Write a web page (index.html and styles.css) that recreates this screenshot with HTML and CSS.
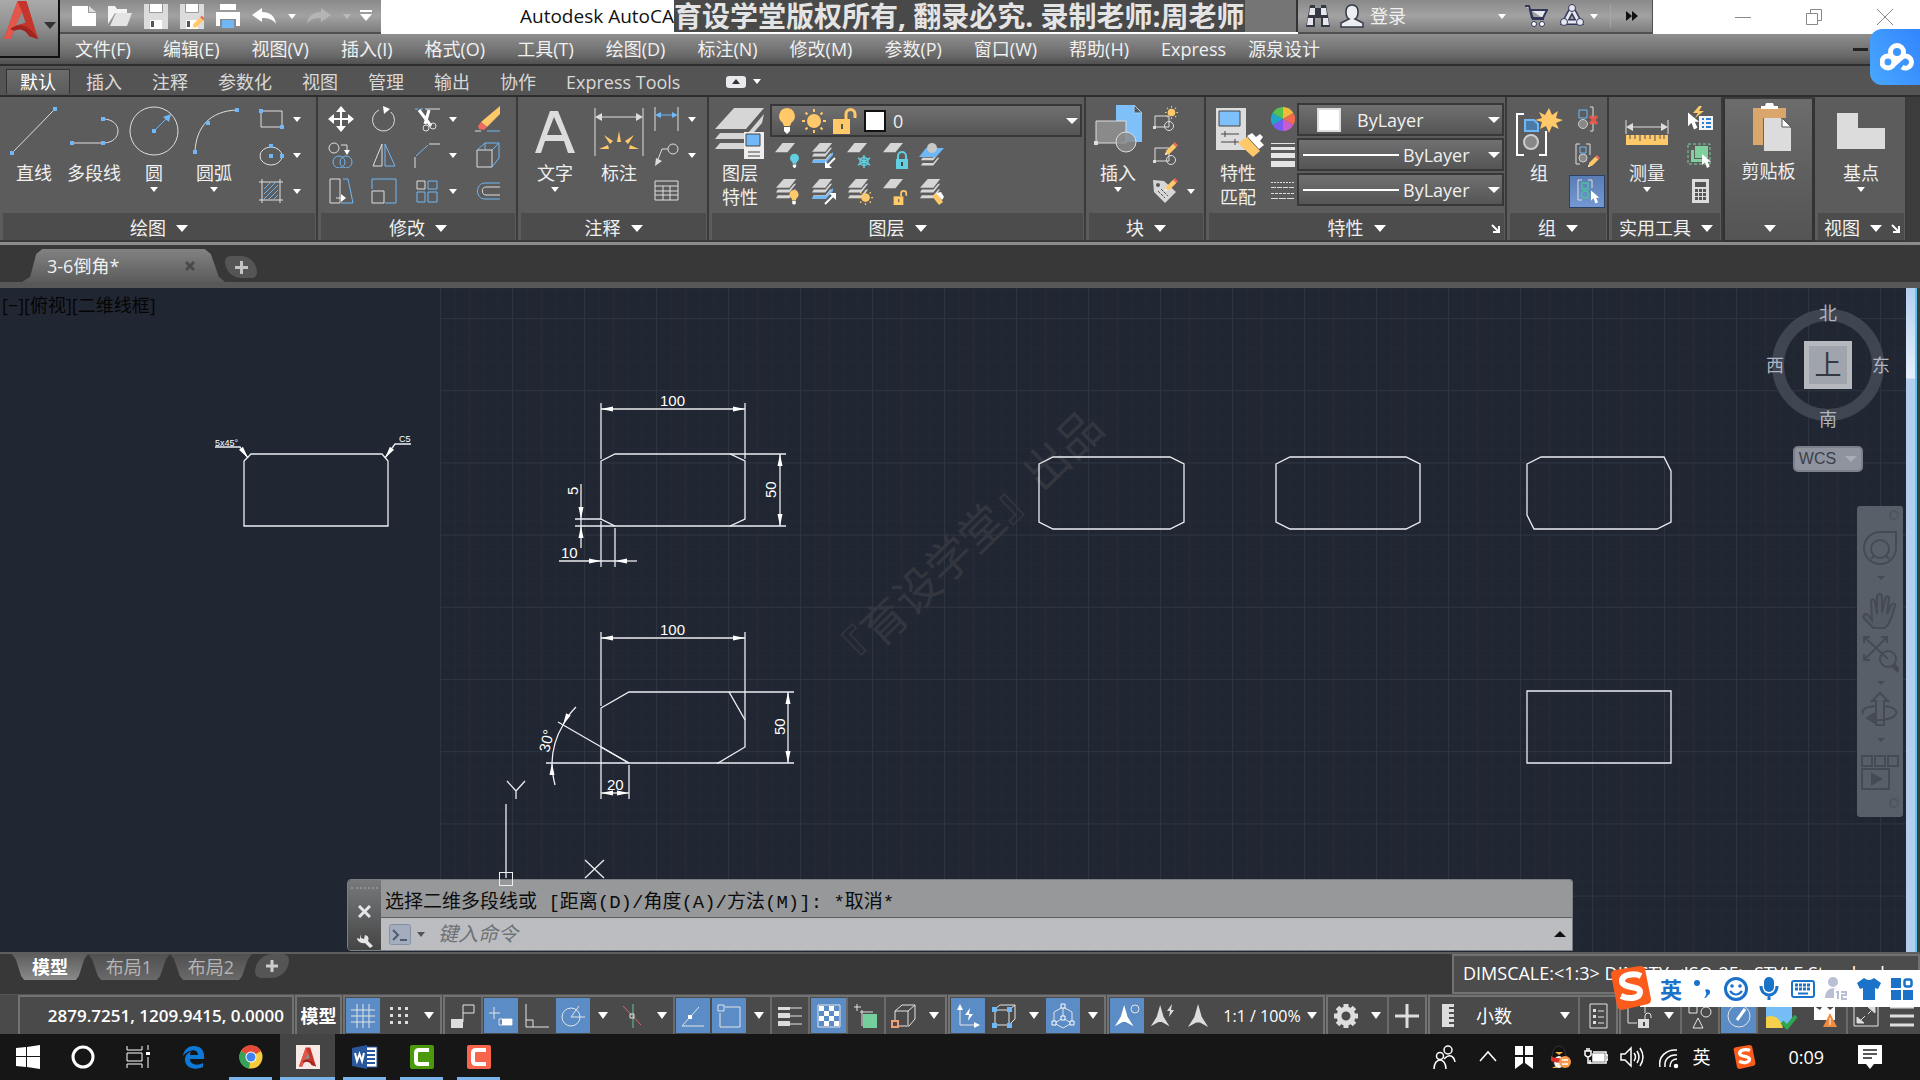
FILE: index.html
```html
<!DOCTYPE html>
<html lang="zh-CN">
<head>
  <meta charset="utf-8">
  <meta name="viewport" content="width=device-width, initial-scale=1">
  <title>Autodesk AutoCAD</title>
  <link rel="stylesheet" href="styles.css">
</head>
<body>
  <!-- shared icon parts -->
  <svg class="defs" width="0" height="0">
    <defs>
      <symbol id="sheet" viewBox="0 0 24 12"><path d="M9 0h15l-9 11H0z" fill="#d6d6d6"/></symbol>
      <symbol id="sheets" viewBox="0 0 26 24">
        <path d="M9 0h13l-7 9H1z" fill="#d6d6d6"/>
        <path d="M4 9L1 14h14l7-9h-2l-5 6H3zM4 15l-3 5h14l7-9h-2l-5 6H3z" fill="#d6d6d6"/>
      </symbol>
      <symbol id="bulb" viewBox="0 0 16 26"><path d="M8 0a8 8 0 0 1 4.500 14.500L11 18H5l-1.500-3.500A8 8 0 0 1 8 0z"/><path d="M5 19h6v4l-3 3-3-3z" fill="#fff"/></symbol>
      <symbol id="sun" viewBox="0 0 24 24"><circle cx="12" cy="12" r="7"/><path d="M12 0v3M12 21v3M0 12h3M21 12h3M3.500 3.500l2 2M18.500 18.500l2 2M20.500 3.500l-2 2M5.500 18.500l-2 2" stroke="#ffc869" stroke-width="2"/></symbol>
      <symbol id="unlock" viewBox="0 0 24 26"><path d="M0 11h17v15H0z"/><path d="M13 11V6a4 4 0 0 1 9 0v4" fill="none" stroke="#ffc869" stroke-width="3"/><path d="M8 16h2v5H8z" fill="#555"/></symbol>
      <symbol id="pencil" viewBox="0 0 16 16"><path d="M0 16l2-6 8-8 4 4-8 8z" fill="#ffc869"/><path d="M10 2l2-2 4 4-2 2z" fill="#f0685f"/><path d="M0 16l1-3 2 2z" fill="#fff"/></symbol>
      <symbol id="cursor" viewBox="0 0 14 20"><path d="M0 0v16l4-4 3 8 4-2-3-7h5z" fill="#fff"/></symbol>
      <symbol id="acadA" viewBox="0 0 40 46"><path d="M0 44L15 2h10l13 42-10-3-3-10-14 4-4 9z" fill="#c5352b"/><path d="M15 2l5 12-9 21-4 9-7 0z" fill="#e2574a"/><path d="M20 14l4 12-11 3z" fill="#8d8d8d"/><path d="M7 33c9-7 20-6 31 11l-10-3c-5-8-11-9-17-6z" fill="#a1251f"/></symbol>
      <symbol id="anno" viewBox="0 0 26 26"><path d="M12 0l4 14 7 11-9-5h-4l-9 5 7-11z"/></symbol>
      <symbol id="sogou" viewBox="0 0 44 44"><path d="M3 8Q3 5 7 4L32 0q4 0 5 3l6 30q0 4-3 5L14 44q-4 0-5-4z" fill="#fb5c1c"/><path d="M33 10c-6-3-19-2-19 5 0 8 18 4 18 11 0 6-10 8-19 4" fill="none" stroke="#fff" stroke-width="6"/></symbol>
      <symbol id="launcher" viewBox="0 0 9 9"><path d="M1 1l6 6M8 2v6H2" fill="none" stroke="#fff" stroke-width="2"/></symbol>
    </defs>
  </svg>

  <div class="app">
    <button class="app-button" aria-label="A">
      <svg width="36" height="42"><use href="#acadA"/></svg><i class="caret dark"></i>
    </button>

    <header class="titlebar">
      <div class="quick">
        <button><svg width="24" height="20" viewBox="0 0 24 20"><path d="M0 0h16v7h8v13H0z" fill="#fff"/><path d="M17 0l7 6h-7z" fill="#ddd"/></svg></button>
        <button><svg width="24" height="20" viewBox="0 0 24 20"><path d="M0 18V0h7l2 3h10v4H7z" fill="#f4f4f4"/><path d="M8 7h16l-5 13H2z" fill="#e4e4e4"/></svg></button>
        <button><svg width="24" height="25" viewBox="0 0 24 25"><path d="M0 0h5v9h14V0h5v25H0z" fill="#dcdcdc"/><path d="M6 0h12v8H6z" fill="#fff"/><path d="M6 16h12v9H6z" fill="#fff"/><path d="M7 17h3v6H7z" fill="#555"/></svg></button>
        <button><svg width="24" height="25" viewBox="0 0 24 25"><path d="M0 0h5v9h14V0h5v25H0z" fill="#dcdcdc"/><path d="M6 0h12v8H6z" fill="#fff"/><path d="M6 16h12v9H6z" fill="#fff"/><path d="M7 17h3v6H7z" fill="#555"/><use href="#pencil" x="12" y="11" width="13" height="14"/></svg></button>
        <button><svg width="24" height="25" viewBox="0 0 24 25"><path d="M4 0h16v6H4zM0 8h24v14H0z" fill="#fff"/><path d="M4 15h16v10H4z" fill="#888"/><path d="M6 16h12v8H6z" fill="#6fb7f7"/></svg></button>
        <button><svg width="24" height="16" viewBox="0 0 24 16"><path d="M10 0v4c8 0 13 4 14 12-3-5-8-6-14-6v4L0 7z" fill="#fff"/></svg></button>
        <button class="slim"><i class="caret"></i></button>
        <button><svg width="24" height="16" viewBox="0 0 24 16"><path d="M14 0v4C6 4 1 8 0 16c3-5 8-6 14-6v4l10-7z" fill="#b4b4b4"/></svg></button>
        <button class="slim"><i class="caret faint"></i></button>
        <button class="slim"><svg width="12" height="12" viewBox="0 0 12 12"><path d="M0 0h12v2H0zM0 4h12l-6 7z" fill="#fff"/></svg></button>
      </div>
      <h1 class="title">Autodesk AutoCA</h1>
      <div class="notice"><span>育设学堂版权所有, 翻录必究. 录制老师:周老师</span></div>
      <div class="account">
        <button class="icon"><svg width="24" height="24" viewBox="0 0 24 24"><path d="M4 1h5v3h6V1h5l4 22h-9v-9H9v9H0z" fill="#333842"/><path d="M4 4h5v7H3zM15 4h5l1 7h-6zM2 14h5v7H1zM17 14h5l1 7h-6z" fill="#e6e8ee"/></svg></button>
        <button class="login"><svg width="24" height="24" viewBox="0 0 24 24"><path d="M12 1c4 0 6 3 6 7 0 3-1 6-3 7l8 4v4H1v-4l8-4c-2-1-3-4-3-7 0-4 2-7 6-7z" fill="#eceef4" stroke="#353a48" stroke-width="1.500"/></svg>登录</button>
        <i class="caret push"></i>
        <button class="icon"><svg width="24" height="24" viewBox="0 0 24 24"><path d="M1 2h4l4 13h11M6 6h17l-4 8H8z" fill="#e6e8ee" stroke="#33385a" stroke-width="2"/><circle cx="10" cy="20" r="2.500" fill="#fff" stroke="#33385a"/><circle cx="18" cy="20" r="2.500" fill="#fff" stroke="#33385a"/></svg></button>
        <button class="icon"><svg width="24" height="24" viewBox="0 0 24 24"><path d="M12 5L5 18h14z" fill="none" stroke="#33385a" stroke-width="6"/><path d="M12 5L5 18h14z" fill="none" stroke="#e6e8ee" stroke-width="3"/><g fill="#e6e8ee" stroke="#33385a"><circle cx="12" cy="4" r="3.500"/><circle cx="4" cy="18" r="3.500"/><circle cx="20" cy="18" r="3.500"/></g></svg></button>
        <i class="caret"></i>
        <button class="more"><svg width="12" height="10" viewBox="0 0 12 10"><path d="M0 0l6 5-6 5zM6 0l6 5-6 5z" fill="#111"/></svg></button>
      </div>
      <div class="window-buttons">
        <button><svg width="16" height="16" viewBox="0 0 16 16"><path d="M0 8.500h16" class="wb"/></svg></button>
        <button><svg width="16" height="16" viewBox="0 0 16 16"><path d="M.5 4.500h11v11H.5zM4.500 4V.5h11v11H12" class="wb"/></svg></button>
        <button><svg width="16" height="16" viewBox="0 0 16 16"><path d="M0 0l16 16M16 0L0 16" class="wb"/></svg></button>
      </div>
    </header>

    <nav class="menubar">
      <button>文件(F)</button><button>编辑(E)</button><button>视图(V)</button><button>插入(I)</button><button>格式(O)</button><button>工具(T)</button><button>绘图(D)</button><button>标注(N)</button><button>修改(M)</button><button>参数(P)</button><button>窗口(W)</button><button>帮助(H)</button>
      <div class="addons"><button>Express</button><button>源泉设计</button></div>
      <span class="min-doc"></span>
    </nav>
    <a class="netdisk" href="#" aria-label="网盘"><svg width="34" height="28" viewBox="0 0 34 28"><g fill="none" stroke="#fff" stroke-width="5"><circle cx="17" cy="9" r="6.500"/><circle cx="8" cy="19" r="6"/><path d="M12 23l9-8a6 6 0 1 1 1 9"/></g></svg></a>

    <nav class="ribbon-tabs">
      <button class="active">默认</button><button>插入</button><button>注释</button><button>参数化</button><button>视图</button><button>管理</button><button>输出</button><button>协作</button><button>Express Tools</button>
      <button class="pill"><svg width="20" height="12" viewBox="0 0 20 12"><rect width="20" height="12" rx="3" fill="#e9e9ee"/><path d="M6 8l4-5 4 5z" fill="#333"/></svg><i class="caret"></i></button>
    </nav>

    <main class="ribbon">
      <section class="panel draw">
        <div class="tools">
          <button class="big"><svg viewBox="0 0 60 60"><path d="M8 52L51 8" class="w"/><path d="M6 50h4v4H6zM49 6h4v4h-4z" class="bf"/></svg>直线</button>
          <button class="big"><svg viewBox="0 0 60 60"><path d="M8 42h31M39 18c20 0 20 24 0 24" class="w"/><path d="M6 40h4v4H6zM37 40h4v4h-4zM37 16h4v4h-4z" class="bf"/></svg>多段线</button>
          <button class="big"><svg viewBox="0 0 60 60"><circle cx="30" cy="30" r="24" class="w"/><path d="M30 30l12-12" class="b"/><path d="M28 28h4v4h-4zM47 13l-2 8-6-5z" class="bf"/></svg>圆<i class="caret"></i></button>
          <button class="big"><svg viewBox="0 0 60 60"><path d="M11 51C12 26 26 10 53 9" class="w"/><path d="M9 49h4v4H9zM22 20h4v4h-4zM51 7h4v4h-4z" class="bf"/></svg>圆弧<i class="caret"></i></button>
          <div class="small cols-2">
            <button><svg viewBox="0 0 26 26"><path d="M3 5h21v16H3z" class="w"/><path d="M1 3h4v4H1zM22 19h4v4h-4z" class="bf"/></svg></button><i class="caret"></i>
            <button><svg viewBox="0 0 26 26"><ellipse cx="13" cy="14" rx="11" ry="9" class="w"/><path d="M11 2h4v4h-4zM11 12h4v4h-4zM22 12h4v4h-4z" class="bf"/></svg></button><i class="caret"></i>
            <button><svg viewBox="0 0 26 26"><path d="M1 4h24M1 22h24M4 1v24M22 1v24" class="w"/><path d="M6 11l6-6M6 16L17 5M6 21L20 7M11 21l9-9M16 21l4-4" class="b"/></svg></button><i class="caret"></i>
          </div>
        </div>
        <footer>绘图<i class="caret lg"></i></footer>
      </section>

      <section class="panel modify">
        <div class="tools">
          <div class="small cols-5">
            <button><svg viewBox="0 0 26 26"><path d="M13 1v24M1 13h24" stroke="#fff" stroke-width="2"/><path d="M13 0l5 6H8zM13 26l5-6H8zM0 13l6-5v10zM26 13l-6-5v10z" fill="#fff"/></svg></button>
            <button><svg viewBox="0 0 26 26"><path d="M8 4a11 11 0 1 0 12 2" class="w"/><path d="M12 0l7 3-6 5z" fill="#fff"/></svg></button>
            <button><svg viewBox="0 0 26 26"><path d="M1 3h10" class="b" stroke-dasharray="3 2"/><path d="M11 3h15" class="w"/><path d="M5 4l12 16M15 4l-4 14" stroke="#fff" stroke-width="3"/><circle cx="12" cy="22" r="3" class="w"/><circle cx="19" cy="20" r="3" class="w"/></svg></button><i class="caret"></i>
            <button><svg viewBox="0 0 26 26"><path d="M25 0v8L12 21l-6-5z" fill="#ffc869"/><path d="M6 16l6 5-3 3-5-1-1-3z" fill="#f0685f"/><path d="M0 25h6" class="w"/><path d="M12 25h13" class="b"/></svg></button>
            <button><svg viewBox="0 0 26 26"><circle cx="6" cy="6" r="5" class="w"/><path d="M13 3h6v7" class="w"/><path d="M16 8h6l-3 5z" fill="#fff"/><circle cx="11" cy="20" r="6" class="b"/><circle cx="18" cy="20" r="6" class="b"/></svg></button>
            <button><svg viewBox="0 0 26 26"><path d="M11 2v22H2z" class="w"/><path d="M14 2v22h10z" class="b"/></svg></button>
            <button><svg viewBox="0 0 26 26"><path d="M1 26V15M15 2h11" class="w"/><path d="M2 14L14 3" class="b"/></svg></button><i class="caret"></i>
            <button><svg viewBox="0 0 26 26"><path d="M2 8h15v17H2z" class="w"/><path d="M2 8l8-7h14l-7 7M24 1v15l-7 9M10 1v7" class="b"/></svg></button>
            <button><svg viewBox="0 0 26 26"><path d="M2 1h10v24H2z" class="w"/><path d="M15 1h5l5 24H13" class="b"/><path d="M8 20h8" class="w"/><path d="M13 16l5 4-5 4z" fill="#fff"/></svg></button>
            <button><svg viewBox="0 0 26 26"><path d="M1 11V1h24v24H14" class="b"/><path d="M1 13h12v12H1z" class="w"/></svg></button>
            <button><svg viewBox="0 0 26 26"><path d="M3 3h8v8H3z" class="w"/><path d="M14 3h9v8h-9zM3 14h8v10H3zM14 14h9v10h-9z" class="b"/></svg></button><i class="caret"></i>
            <button><svg viewBox="0 0 26 26"><path d="M25 5H10c-10 0-10 16 0 16h15" class="b"/><path d="M25 9H11c-5 0-5 8 0 8h14" class="w"/></svg></button>
          </div>
        </div>
        <footer>修改<i class="caret lg"></i></footer>
      </section>

      <section class="panel annotate">
        <div class="tools">
          <button class="big"><svg viewBox="0 0 60 60"><path d="M10 52L25 10h8l17 42h-7l-4-12H20l-4 12zM22 34h15l-8-18z" fill="#dcdcdc"/></svg>文字<i class="caret"></i></button>
          <button class="big"><svg viewBox="0 0 60 60"><path d="M6 7v48M54 7v48M8 16h44" class="w"/><path d="M6 16l7-4v8zM54 16l-7-4v8z" fill="#ddd"/><g fill="#ffc869"><path d="M28 41l2-11 2 11zM21 43l-6-9 9 6zM39 43l6-9-9 6zM10 48l9-4 1 4zM50 48l-9-4-1 4z"/></g></svg>标注</button>
          <div class="small cols-2">
            <button><svg viewBox="0 0 26 26"><path d="M2 1v24M25 1v24" class="w"/><path d="M4 9h19" class="b"/><path d="M2 9l6-3v6zM25 9l-6-3v6z" class="bf"/></svg></button><i class="caret"></i>
            <button><svg viewBox="0 0 26 26"><circle cx="20" cy="7" r="5" class="w"/><path d="M15 7H9L4 20" class="w"/><path d="M2 24l1-8 6 3z" fill="#ddd"/></svg></button><i class="caret"></i>
            <button><svg viewBox="0 0 26 26"><path d="M2 3h23v19H2zM2 8h23M2 13h23M2 17h23M10 8v14M17 8v14" class="w"/></svg></button>
          </div>
        </div>
        <footer>注释<i class="caret lg"></i></footer>
      </section>

      <section class="panel layers">
        <div class="tools">
          <button class="big"><svg viewBox="0 0 60 60"><g fill="#d6d6d6"><path d="M24 7h30L36 28H5zM5 38l5-6h28l16-19-2 9-14 16zM5 48l5-6h28v6z"/></g><path d="M34 31h20v27H34z" fill="#eee"/><path d="M36 33h14v12H36z" fill="#6fb7f7" stroke="#444"/><path d="M38 51h12M38 55h12" stroke="#444"/></svg>图层<br>特性</button>
          <div class="layer-box">
            <div class="combo">
              <svg width="16" height="26" fill="#ffc869"><use href="#bulb"/></svg>
              <svg width="24" height="24" fill="#ffc869"><use href="#sun"/></svg>
              <svg width="24" height="26" fill="#ffc869"><use href="#unlock"/></svg>
              <span class="swatch black"></span>
              <select aria-label="图层"><option>0</option></select>
            </div>
            <div class="small cols-layer">
              <button><svg viewBox="0 0 26 26"><use href="#sheet" width="20" height="10"/><use href="#bulb" x="15" y="10" width="9" height="16" fill="#62cfe0"/></svg></button>
              <button><svg viewBox="0 0 26 26"><use href="#sheets" width="25" height="23"/><path d="M1 20h14l7-8v-3l-7 8H3z" fill="#6fb7f7"/><path d="M24 15l-8 8" stroke="#fff" stroke-width="2"/><path d="M14 25v-7l7 7z" fill="#fff"/></svg></button>
              <button><svg viewBox="0 0 26 26"><use href="#sheet" width="20" height="10"/><g fill="none" stroke="#62cfe0" stroke-width="1.500"><path d="M17 12v13M11 15l12 7M23 15l-12 7"/><circle cx="17" cy="18.500" r="4"/></g></svg></button>
              <button><svg viewBox="0 0 26 26"><use href="#sheet" width="20" height="10"/><path d="M13 16h12v10H13z" fill="#62cfe0"/><path d="M15 16v-3a4 4 0 0 1 8 0v3" stroke="#62cfe0" stroke-width="2" fill="none"/><path d="M18 19h2v4h-2z" fill="#444"/></svg></button>
              <button><svg viewBox="0 0 26 26"><use href="#sheets" y="5" width="25" height="21"/><path d="M7 5h18l-8 9H0z" fill="#6fb7f7"/><circle cx="13" cy="5" r="5" fill="#c8c8c8"/></svg></button>
              <button><svg viewBox="0 0 26 26"><use href="#sheets" width="25" height="23"/><use href="#bulb" x="14" y="11" width="10" height="15" fill="#ffc869"/></svg></button>
              <button><svg viewBox="0 0 26 26"><use href="#sheets" width="25" height="23"/><path d="M1 20h14l7-8v-3l-7 8H3z" fill="#6fb7f7"/><path d="M14 25l8-8" stroke="#fff" stroke-width="2"/><path d="M25 14v7l-7-7z" fill="#fff"/></svg></button>
              <button><svg viewBox="0 0 26 26"><use href="#sheets" width="25" height="23"/><use href="#sun" x="11" y="11" width="15" height="15" fill="#ffc869"/></svg></button>
              <button><svg viewBox="0 0 26 26"><use href="#sheet" width="20" height="10"/><use href="#unlock" x="10" y="11" width="15" height="15" fill="#ffc869"/></svg></button>
              <button><svg viewBox="0 0 26 26"><use href="#sheets" width="25" height="23"/><path d="M13 17l5-3 6 9-4 3z" fill="#ffc869"/><path d="M17 14l5-1 3 5-2 3z" fill="#fff"/></svg></button>
            </div>
          </div>
        </div>
        <footer>图层<i class="caret lg"></i></footer>
      </section>

      <section class="panel block">
        <div class="tools">
          <button class="big"><svg viewBox="0 0 60 60"><path d="M28 4h18l8 8v29H28z" fill="#7ec0fa"/><path d="M46 4l8 8h-8z" fill="#5a5a5a" stroke="#9fd0fb"/><path d="M8 20h30v22H8z" fill="#8a8a8a" stroke="#ddd"/><circle cx="38" cy="41" r="10" fill="#8a8a8a" fill-opacity=".8" stroke="#ddd"/><path d="M6 40h4v4H6z" fill="#ddd"/></svg>插入<i class="caret"></i></button>
          <div class="small cols-2">
            <button><svg viewBox="0 0 26 26"><path d="M3 10h14v11H3z" class="w"/><circle cx="17" cy="20" r="4.500" class="w"/><path d="M1 20h3v3H1z" fill="#ddd"/><use href="#sun" x="13" y="0" width="13" height="13" fill="#ffc869"/></svg></button><span></span>
            <button><svg viewBox="0 0 26 26"><path d="M3 6h14v13H3z" class="w"/><circle cx="19" cy="18" r="4.500" class="w"/><path d="M1 18h3v3H1z" fill="#ddd"/><use href="#pencil" x="13" y="0" width="13" height="13"/></svg></button><span></span>
            <button><svg viewBox="0 0 26 26"><path d="M1 2l11 1 12 11-11 11L2 14z" fill="#d6d6d6"/><circle cx="6" cy="7" r="2" fill="#555"/><path d="M6 13l7 7M9 11l7 7" stroke="#555" stroke-dasharray="3 1"/><use href="#pencil" x="13" y="0" width="13" height="13"/></svg></button><i class="caret"></i>
          </div>
        </div>
        <footer>块<i class="caret lg"></i></footer>
      </section>

      <section class="panel props">
        <div class="tools">
          <button class="big"><svg viewBox="0 0 60 60"><path d="M8 7h30v42H8z" fill="#ddd"/><path d="M11 10h21v15H11z" fill="#7ec0fa" stroke="#444"/><path d="M13 33h18M13 41h18M17 30v6M27 38v6" stroke="#444"/><path d="M30 42l9-6 13 14-7 6z" fill="#ffc869"/><path d="M39 35l5-3 4 4 4-3 3 3-3 4 4 4-5 4z" fill="#fff"/></svg>特性<br>匹配</button>
          <div class="prop-icons">
            <svg width="24" height="24" viewBox="0 0 24 24"><g><path d="M12 12V0a12 12 0 0 1 10.400 6z" fill="#f5b83d"/><path d="M12 12l10.400-6a12 12 0 0 1 0 12z" fill="#ef6a50"/><path d="M12 12l10.400 6A12 12 0 0 1 12 24z" fill="#c85bd0"/><path d="M12 12v12A12 12 0 0 1 1.600 18z" fill="#7a5bef"/><path d="M12 12L1.600 18a12 12 0 0 1 0-12z" fill="#1fa7c9"/><path d="M12 12L1.600 6A12 12 0 0 1 12 0z" fill="#57c04f"/></g></svg>
            <svg width="24" height="24" viewBox="0 0 24 24"><path d="M0 0h24v1H0zM0 4h24v3H0zM0 10h24v5H0zM0 18h24v6H0z" fill="#e4e4e4"/></svg>
            <svg width="24" height="24" viewBox="0 0 24 24"><path d="M0 3.500h24" stroke="#ddd" stroke-dasharray="2 1"/><path d="M0 8.500h24" stroke="#ddd" stroke-dasharray="5 1"/><path d="M0 14.500h24" stroke="#ddd" stroke-dasharray="3 1"/><path d="M0 19.500h24" stroke="#ddd" stroke-dasharray="7 1"/></svg>
          </div>
          <div class="prop-combos">
            <div class="combo"><span class="swatch"></span><select aria-label="颜色"><option>ByLayer</option></select></div>
            <div class="combo"><span class="rule"></span><select aria-label="线宽"><option>ByLayer</option></select></div>
            <div class="combo"><span class="rule"></span><select aria-label="线型"><option>ByLayer</option></select></div>
          </div>
        </div>
        <footer>特性<i class="caret lg"></i><svg class="launch" width="9" height="9"><use href="#launcher"/></svg></footer>
      </section>

      <section class="panel group">
        <div class="tools">
          <button class="big"><svg viewBox="0 0 60 60"><path d="M15 13H8v41h7M30 54h7V30" fill="none" stroke="#fff" stroke-width="2"/><path d="M16 19h9l4 4v7H16z" fill="#4a7ba8" stroke="#6fb7f7" stroke-width="2"/><circle cx="22" cy="41" r="7" fill="#888" stroke="#ccc" stroke-width="2"/><path d="M40 7l3 7 6-4-2 7 7 2-7 3 3 6-7-3-3 7-3-7-6 3 2-7-7-2 7-2-3-6 6 3z" fill="#ffc869"/></svg>组</button>
          <div class="small">
            <button><svg viewBox="0 0 26 26"><path d="M16 1h3v24h-3" class="w"/><path d="M5 4h8v8H5z" fill="#4a7ba8" class="b"/><circle cx="9" cy="18" r="4.500" fill="#888" stroke="#ccc"/><path d="M16 10l7 8M23 10l-7 8" stroke="#e8574d" stroke-width="3"/></svg></button>
            <button><svg viewBox="0 0 26 26"><path d="M6 2H2v20h4M12 2h4v11" class="w"/><path d="M6 5h6v6H6z" class="b"/><circle cx="9" cy="16" r="4" fill="#888" stroke="#ccc"/><use href="#pencil" x="14" y="13" width="12" height="12"/></svg></button>
            <button class="on"><svg viewBox="0 0 26 26"><path d="M8 2H4v20h4M14 2h4v8" class="w"/><path d="M8 5h6v6H8zM11 13a3.500 3.500 0 1 1 0 7 3.500 3.500 0 0 1 0-7" fill="none" stroke="#4cc09a" stroke-width="1.500"/><use href="#cursor" x="17" y="12" width="9" height="14"/></svg></button>
          </div>
        </div>
        <footer>组<i class="caret lg"></i></footer>
      </section>

      <section class="panel utils">
        <div class="tools">
          <button class="big"><svg viewBox="0 0 60 60"><path d="M9 19v14M51 19v14M11 26h38" class="w"/><path d="M9 26l7-4v8zM51 26l-7-4v8z" fill="#ddd"/><path d="M9 34h42v10H9z" fill="#ffc869"/><path d="M13 34v4M18 34v4M23 34v6M28 34v4M33 34v4M38 34v6M43 34v4M47 34v4" stroke="#555"/></svg>测量<i class="caret"></i></button>
          <div class="small">
            <button><svg viewBox="0 0 26 26"><path d="M12 0L6 7h5l-3 5 9-7h-5l3-5z" fill="#ffc869"/><use href="#cursor" x="1" y="6" width="12" height="18"/><path d="M12 10h14v14H12z" fill="#f4f4f4"/><path d="M15 13h2M19 13h5M15 17h2M19 17h5M15 21h2M19 21h5" stroke="#2f7fd0" stroke-width="2"/></svg></button>
            <button><svg viewBox="0 0 26 26"><path d="M1 2h22v20H1z" fill="none" stroke="#7fcf9f" stroke-dasharray="3 2"/><path d="M8 4h13v12H8zM4 8h3v9h9v3H4z" fill="#7fcf9f"/><use href="#cursor" x="15" y="12" width="10" height="14"/></svg></button>
            <button><svg viewBox="0 0 26 26"><path d="M5 1h17v24H5z" fill="#dcdcdc"/><path d="M8 4h11v5H8zM8 11h3v3H8zM12 11h3v3h-3zM16 11h3v3h-3zM8 15h3v3H8zM12 15h3v3h-3zM16 15h3v3h-3zM8 19h3v3H8zM12 19h3v3h-3zM16 19h3v3h-3z" fill="#555"/></svg></button>
          </div>
        </div>
        <footer>实用工具<i class="caret lg"></i></footer>
      </section>

      <section class="panel clip">
        <div class="tools">
          <button class="big"><svg viewBox="0 0 60 60"><path d="M14 9h33v10H24v27H14z" fill="#dba66b"/><path d="M22 10V7h4l1-3h7l1 3h4v3z" fill="#fff"/><path d="M25 19h17l10 10v23H25z" fill="#dcdcdc"/><path d="M43 19l9 9h-9z" fill="#fff" stroke="#555"/></svg>剪贴板</button>
        </div>
        <footer><i class="caret lg"></i></footer>
      </section>

      <section class="panel view">
        <div class="tools">
          <button class="big"><svg viewBox="0 0 60 60"><path d="M6 12h21v15h27v21H6z" fill="#dcdcdc"/></svg>基点<i class="caret"></i></button>
        </div>
        <footer>视图<i class="caret lg"></i><svg class="launch" width="9" height="9"><use href="#launcher"/></svg></footer>
      </section>
    </main>

    <div class="doc-tabs">
      <button class="doc-tab"><span>3-6倒角*</span><svg width="10" height="10" viewBox="0 0 10 10"><path d="M1 1l8 8M9 1L1 9" stroke="#4a4a4a" stroke-width="3"/></svg></button>
      <button class="add-tab"><svg width="13" height="13" viewBox="0 0 13 13"><path d="M6.500 0v13M0 6.500h13" stroke="#c4c4c4" stroke-width="3"/></svg></button>
    </div>

    <div class="canvas">
      <svg class="drawing" width="100%" height="100%">
        <defs>
          <pattern id="minor" x="440" y="30" width="14.400" height="14.440" patternUnits="userSpaceOnUse"><path d="M.5 0v15M0 .5h15" stroke="#242a35" fill="none"/></pattern>
          <pattern id="major" x="440" y="30" width="72" height="72.200" patternUnits="userSpaceOnUse"><path d="M.5 0v73M0 .5h72" stroke="#2e3540" fill="none"/></pattern>
          <marker id="arrow" viewBox="0 0 12 6" refX="12" refY="3" markerWidth="12" markerHeight="6" markerUnits="userSpaceOnUse" orient="auto-start-reverse"><path d="M0 .5L12 3 0 5.500z" fill="#fff"/></marker>
        </defs>
        <svg x="440" width="100%" height="100%" viewBox="440 0 1920 664" preserveAspectRatio="xMinYMin slice">
          <rect x="440" width="1920" height="1400" fill="url(#minor)"/>
          <rect x="440" width="1920" height="1400" fill="url(#major)"/>
        </svg>
        <g transform="translate(0 -288)">
          <text class="stamp" x="961" y="562" transform="rotate(-44 961 539)">『育设学堂』出品</text>

          <g class="line">
            <!-- 5x45 part -->
            <path d="M244 526V461l7-7h131l6 7v65z"/>
            <path d="M215 447h25l8 11" marker-end="url(#arrow)"/>
            <path d="M411 444h-16l-10 14" marker-end="url(#arrow)"/>

            <!-- 10 x 5 chamfer -->
            <path d="M601 461l14-7h115l15 7v58l-15 7H615l-14-7z"/>
            <path d="M601 403v56M745 403v56M730 454h56M730 526h56M575 519h26M575 526h40M601 521v46M615 528v39"/>
            <path d="M601 409h144" marker-start="url(#arrow)" marker-end="url(#arrow)"/>
            <path d="M780 454v72" marker-start="url(#arrow)" marker-end="url(#arrow)"/>
            <path d="M581 484v35" marker-end="url(#arrow)"/>
            <path d="M581 548v-22" marker-end="url(#arrow)"/>
            <path d="M581 519v7M601 561h14"/>
            <path d="M559 561h42" marker-end="url(#arrow)"/>
            <path d="M637 561h-22" marker-end="url(#arrow)"/>

            <!-- 20 x 30deg chamfer -->
            <path d="M601 708l28-16h100l16 28v27l-27 16h-89l-28-16z"/>
            <path d="M601 632v74M745 632v88M729 692h65M717 763h77M546 763h83M601 747v52M629 765v34M629 763l-71-41"/>
            <path d="M601 638h144" marker-start="url(#arrow)" marker-end="url(#arrow)"/>
            <path d="M788 692v71" marker-start="url(#arrow)" marker-end="url(#arrow)"/>
            <path d="M601 793h28" marker-start="url(#arrow)" marker-end="url(#arrow)"/>
            <path d="M552 763a77 77 0 0 1 11-38"/>
            <path d="M576 707q-8 8-13 18" marker-end="url(#arrow)"/>
            <path d="M555 785q-3-12-3-22" marker-end="url(#arrow)"/>

            <path d="M1039 464l14-7h117l14 7v58l-14 7h-117l-14-7z"/>
            <path d="M1276 464l14-7h116l14 7v58l-14 7h-116l-14-7z"/>
            <path d="M1527 464l14-7h123l7 14v51l-14 7h-123l-7-14z"/>
            <path d="M1527 691h144v72h-144z"/>

            <!-- ucs -->
            <path d="M507 781l9 10 9-10M516 791v8M506 804v74"/>
            <path d="M585 860l19 18M604 860l-19 18"/>
          </g>

          <g class="dim">
            <text class="tiny" x="215" y="446">5x45°</text>
            <text class="tiny" x="399" y="442">C5</text>
            <text x="660" y="406">100</text>
            <text x="660" y="635">100</text>
            <text x="561" y="558">10</text>
            <text x="607" y="790">20</text>
            <text transform="translate(776 498) rotate(-90)">50</text>
            <text transform="translate(578 495) rotate(-90)">5</text>
            <text transform="translate(785 735) rotate(-90)">50</text>
            <text transform="translate(549 753) rotate(-77)">30°</text>
          </g>
        </g>
      </svg>

      <span class="view-label">[−][俯视][二维线框]</span>

      <div class="viewcube">
        <span class="n">北</span><span class="w1">西</span><button>上</button><span class="e">东</span><span class="s">南</span>
      </div>
      <button class="wcs">WCS<i></i></button>

      <aside class="navbar">
        <svg width="38" height="300" viewBox="0 0 38 300" fill="none" stroke="#454b54" stroke-width="2">
          <g stroke="#4f555d"><circle cx="33" cy="5" r="4"/><circle cx="33" cy="293" r="4"/></g>
          <path d="M19 22h16v17a16 16 0 1 1-16-17z"/><circle cx="19" cy="39" r="9"/><path d="M10 49l4-4M28 49l-4-4"/>
          <path d="M12 118c-4-6-12-10-9-13s6 2 8 5l-1-18c0-4 4-3 4 0l2 12V87c0-4 5-4 5 0v16l3-14c1-4 5-3 4 1l-2 14 4-9c2-3 5-1 4 1-3 9-4 17-10 22z" fill="#555b64"/>
          <path d="M3 127l24 22M26 127L3 150M3 133v-6h6M20 127h6v6M3 144v6h6"/><circle cx="27" cy="149" r="8"/><path d="M32 155l6 6" stroke-width="5"/>
          <path d="M15 215v-24h-4l8-8 8 8h-4v24z"/><path d="M9 210c30 2 34-12 14-14M14 196c-10 1-14 4-12 8"/><path d="M6 208l8-5v10z" fill="#454b54"/>
          <path d="M1 246h10v10H1zM14 246h10v10H14zM27 246h10v10H27zM1 259h27v20H1z"/><path d="M11 264l9 5-9 5z" fill="#454b54"/>
          <g fill="#454b54" stroke="none"><path d="M16 66h8l-4 4zM16 171h8l-4 4zM16 228h8l-4 4z"/></g>
        </svg>
      </aside>
      <div class="edge"></div>

      <div class="command">
        <div class="cmd-side">
          <span class="grip"></span>
          <button><svg width="13" height="13" viewBox="0 0 13 13"><path d="M1 1l11 11M12 1L1 12" stroke="#e6e6e6" stroke-width="3"/></svg></button>
          <button><svg width="16" height="14" viewBox="0 0 16 14"><path d="M3 0l1 4 3 1 1-4c4 1 4 4 3 6l5 5-3 2-5-5C4 10 0 7 0 4l3 1z" fill="#e6e6e6"/></svg></button>
        </div>
        <div class="cmd-main">
          <output>选择二维多段线或 [距离(D)/角度(A)/方法(M)]: *取消*</output>
          <div class="cmd-line">
            <button><svg width="22" height="21" viewBox="0 0 22 21"><rect x=".5" y=".5" width="21" height="20" rx="2" fill="#a3adbd" stroke="#8390a5"/><path d="M4 6l5 5-5 5" fill="none" stroke="#4f5b70" stroke-width="2"/><path d="M11 16h7" stroke="#4f5b70" stroke-width="2"/></svg></button>
            <i class="caret gray"></i>
            <input type="text" placeholder="键入命令" aria-label="键入命令">
            <i class="up"></i>
          </div>
        </div>
      </div>
      <span class="origin"></span>
    </div>

    <div class="layout-row">
      <div class="sheets">
        <button class="active">模型</button><button>布局1</button><button>布局2</button>
        <button class="add"><svg width="12" height="12" viewBox="0 0 12 12"><path d="M6 0v12M0 6h12" stroke="#ccc" stroke-width="3"/></svg></button>
      </div>
      <div class="dimscale">DIMSCALE:&lt;1:3&gt; DIMSTY:&lt;ISO-25&gt; STYLE:Standard</div>
    </div>

    <div class="status">
      <div class="grp coords"><button>2879.7251, 1209.9415, 0.0000</button></div>
      <div class="grp model"><button>模型</button></div>
      <div class="grp">
        <button class="on"><svg viewBox="0 0 24 24"><path d="M6 0v24M12 0v24M18 0v24M0 6h24M0 12h24M0 18h24" class="l"/></svg></button>
        <button><svg viewBox="0 0 24 24"><path d="M3 3h3v3H3zM11 3h3v3h-3zM18 3h3v3h-3zM3 10h3v3H3zM11 10h3v3h-3zM18 10h3v3h-3zM3 17h3v3H3zM11 17h3v3h-3zM18 17h3v3h-3z" fill="#ddd"/></svg></button>
        <button class="dd"><i class="caret"></i></button>
      </div>
      <div class="grp">
        <button class="sep"><svg viewBox="0 0 24 24"><path d="M0 15h12v9H0z" fill="#ddd"/><path d="M12 18V1h11v8H12" class="l"/></svg></button>
        <button class="on"><svg viewBox="0 0 24 24"><path d="M5 3v12M0 9h11M10 15h13v6H10z" class="l"/><path d="M13 15h10v6H13z" fill="#fff"/></svg></button>
        <button><svg viewBox="0 0 24 24"><path d="M1 0v23h23M1 16h7v7" class="l"/></svg></button>
        <button class="on"><svg viewBox="0 0 24 24"><circle cx="10" cy="13" r="9" class="l"/><path d="M10 13h14M10 13l8-11" class="l"/></svg></button>
        <button class="dd"><i class="caret"></i></button>
        <button><svg viewBox="0 0 24 24"><path d="M3 2l18 19" stroke="#d76a6a"/><path d="M13 0v24" stroke="#5ec6a0"/><path d="M10 10h4v4h-4z" class="l"/></svg></button>
        <button class="dd sep"><i class="caret"></i></button>
        <button class="on"><svg viewBox="0 0 24 24"><path d="M18 3L1 22h22" class="l"/><path d="M7 11h4v4H7z" fill="#fff"/></svg></button>
        <button class="on"><svg viewBox="0 0 24 24"><path d="M8 3h15v20H3V9M1 1h6v6H1z" class="l"/></svg></button>
        <button class="dd sep"><i class="caret"></i></button>
        <button class="sep"><svg viewBox="0 0 24 24"><path d="M0 4h24M0 12h24M0 20h24" class="l"/><path d="M0 3h12v3H0zM0 9h12v5H0zM0 17h12v5H0z" fill="#ddd"/></svg></button>
        <button class="on sep"><svg viewBox="0 0 24 24"><path d="M1 1h22v22H1z" class="l"/><path d="M2 2h5v5H2zM12 2h5v5h-5zM7 7h5v5H7zM17 7h5v5h-5zM2 12h5v5H2zM12 12h5v5h-5zM7 17h5v5H7zM17 17h5v5h-5z" fill="#fff"/></svg></button>
        <button class="sep"><svg viewBox="0 0 24 24"><path d="M0 3h7M3 0v7M6 8h13M8 6v16" class="l"/><path d="M9 10h14v14H9z" fill="#74cf9c"/></svg></button>
        <button><svg viewBox="0 0 24 24"><path d="M3 7l7-6h13v14l-6 7H7M3 7v9M3 7h13M16 7v14M16 7l7-6" class="l"/><path d="M0 17h6v6H0z" fill="none" stroke="#f0a070" stroke-width="2"/></svg></button>
        <button class="dd"><i class="caret"></i></button>
      </div>
      <div class="grp">
        <button class="on"><svg viewBox="0 0 24 24"><path d="M4 5v16h14" class="l"/><path d="M4 0l3 6H1zM24 21l-6-3v6z" fill="#fff"/><path d="M14 4l-5 7h4l-1 6 5-7h-4z" fill="#fff"/></svg></button>
        <button><svg viewBox="0 0 24 24"><path d="M3 6h14v15H3zM3 5l5-4h15v14l-6 6M17 6l6-5" class="l"/><path d="M0 3h5v5H0zM15 3h5v5h-5zM0 19h5v5H0zM15 19h5v5h-5z" fill="#6fb7f7"/></svg></button>
        <button class="dd"><i class="caret"></i></button>
        <button class="on"><svg viewBox="0 0 24 24"><path d="M12 3L3 8v11l9 5 9-5V8zM12 3v11M12 14l-8 5M12 14l8 5" class="l"/><path d="M10 0h4v4h-4zM1 17h4v4H1zM19 17h4v4h-4zM10 12h4v4h-4z" fill="#5b8cc6" stroke="#fff"/></svg></button>
        <button class="dd"><i class="caret"></i></button>
      </div>
      <div class="grp">
        <button class="on"><svg viewBox="0 0 24 24"><use href="#anno" width="22" height="24" x="-1" fill="#fff"/><circle cx="20" cy="5" r="4" class="l"/></svg></button>
        <button><svg viewBox="0 0 24 24"><use href="#anno" width="22" height="24" x="-1" fill="#ddd"/><path d="M21 0l-5 7h3l-1 6 5-7h-3z" fill="#ddd"/></svg></button>
        <button><svg viewBox="0 0 24 24"><use href="#anno" width="24" height="24" fill="#ddd"/></svg></button>
        <button class="scale">1:1 / 100%<i class="caret"></i></button>
      </div>
      <div class="grp">
        <button><svg viewBox="0 0 24 24"><circle cx="12" cy="12" r="7" fill="none" stroke="#ddd" stroke-width="5"/><path d="M12 0v4M12 20v4M0 12h4M20 12h4M3.500 3.500l3 3M17.500 17.500l3 3M20.500 3.500l-3 3M6.500 17.500l-3 3" stroke="#ddd" stroke-width="5"/></svg></button>
        <button class="dd sep"><i class="caret"></i></button>
        <button><svg viewBox="0 0 24 24"><path d="M12 0v24M0 12h24" stroke="#ddd" stroke-width="3"/></svg></button>
      </div>
      <div class="grp">
        <button><svg viewBox="0 0 24 24"><path d="M6 0h12v3h-5v2h5v3h-5v2h5v3h-5v2h5v3h-5v2h5v3H6z" fill="#ddd"/></svg></button>
        <button class="units sep">小数<i class="caret"></i></button>
        <button><svg viewBox="0 0 24 24"><path d="M4 0h17v24H4z" class="l"/><path d="M7 5h3v3H7zM7 11h3v3H7zM7 17h3v3H7z" fill="#ddd"/><path d="M12 7h6M12 13h6M12 19h6" class="l"/></svg></button>
      </div>
      <div class="grp last">
        <button><svg viewBox="0 0 24 24"><path d="M18 9V1H1v18h9" class="l"/><path d="M11 15h11v9H11z" fill="#ddd"/><path d="M18 15v-3a3 3 0 0 1 6 0v2" class="l"/><path d="M16 18h2v4h-2z" fill="#444"/></svg></button>
        <button class="dd sep"><i class="caret"></i></button>
        <button class="sep"><svg viewBox="0 0 24 24"><path d="M1 0h8v9H1zM10 14l5 10H5z" class="l"/><circle cx="18" cy="8" r="5" class="l"/></svg></button>
        <button class="on sep"><svg viewBox="0 0 24 24"><circle cx="12" cy="12" r="11" class="l"/><path d="M10 16l8-11" stroke="#fff" stroke-width="3"/></svg></button>
        <button class="wide"><svg viewBox="0 0 24 24"><path d="M-3 0h26v20H-3z" fill="#74bdf5"/><path d="M-3 13c7-3 14 0 17 11H-3z" fill="#f5d04d"/><path d="M13 18l5 5 9-11" fill="none" stroke="#2ea84f" stroke-width="4"/></svg></button>
        <button class="wide sep"><svg viewBox="0 0 24 24"><path d="M1 2l6 4 4-6 6 6 5-4v14H1z" fill="#fff"/><path d="M17 9l7 14H10z" fill="#f08a3c"/><path d="M17 14v7" stroke="#fff"/></svg></button>
        <button><svg viewBox="0 0 24 24"><path d="M0 0h24v22H0z" class="l"/><path d="M14 3h7v6zM3 13v6h7zM17 7l-3 3M7 16l4-4" stroke="#ddd" fill="#ddd"/></svg></button>
        <button><svg viewBox="0 0 24 24"><path d="M0 3h24M0 12h24M0 21h24" stroke="#ddd" stroke-width="3"/></svg></button>
      </div>
    </div>

    <div class="ime">
      <svg class="ime-logo" width="44" height="44"><use href="#sogou"/></svg>
      <b>英</b>
      <svg viewBox="0 0 24 24"><circle cx="6" cy="6" r="3"/><path d="M14 13a3 3 0 1 1 3 5q-1 3-4 3 3-3 2-6z"/></svg>
      <svg viewBox="0 0 24 24"><circle cx="12" cy="12" r="10.500" fill="none" stroke="#1a73c8" stroke-width="3"/><circle cx="8" cy="9" r="1.800"/><circle cx="16" cy="9" r="1.800"/><path d="M6 14q6 7 12 0" fill="none" stroke="#1a73c8" stroke-width="2"/></svg>
      <svg viewBox="0 0 24 24"><rect x="7" width="10" height="15" rx="5"/><path d="M4 9c0 12 16 12 16 0M12 18v5" fill="none" stroke="#1a73c8" stroke-width="3"/></svg>
      <svg viewBox="0 0 24 24"><rect x="1" y="4" width="22" height="16" rx="2" fill="none" stroke="#1a73c8" stroke-width="2"/><path d="M4 8h16M4 12h16" stroke="#1a73c8" stroke-width="3" stroke-dasharray="3 1"/><path d="M7 16.500h10" stroke="#1a73c8" stroke-width="2"/></svg>
      <svg class="person" viewBox="0 0 24 24"><circle cx="9" cy="5" r="5"/><path d="M1 21c0-13 16-13 16 0z"/><rect x="10" y="12" width="14" height="12" fill="#fff"/><path d="M12 15h2v7M17 15h5v3h-4v4h5" fill="none" stroke="#b9c0d6" stroke-width="2"/></svg>
      <svg viewBox="0 0 24 24"><path d="M7 1q5 4 10 0l7 5-3 6-3-1v12H6V11l-3 1-3-6z"/></svg>
      <svg viewBox="0 0 24 24"><path d="M1 1h10v10H1zM1 13h10v10H1zM13 13h10v10H13z"/><rect x="14.500" y="2.500" width="7" height="7" rx="2" fill="none" stroke="#1a73c8" stroke-width="2.500"/></svg>
    </div>

    <footer class="taskbar">
      <button><svg width="24" height="24" viewBox="0 0 24 24" fill="#fff"><path d="M0 3l10-1v9H0zM11 2l13-2v11H11zM0 12h10v10L0 21zM11 12h13v12l-13-2z"/></svg></button>
      <button><svg width="24" height="24" viewBox="0 0 24 24"><circle cx="12" cy="12" r="10" fill="none" stroke="#fff" stroke-width="3"/></svg></button>
      <button><svg width="24" height="24" viewBox="0 0 24 24"><path d="M1 1v4h15V1M1 23v-4h15v4M1 8h15v8H1zM22 0v5M22 12v11" fill="none" stroke="#fff"/><path d="M20 7h4v3h-4z" fill="#fff"/></svg></button>
      <button class="pin"><svg width="24" height="24" viewBox="0 0 24 24"><path d="M1 11C2 4 7 1 12 1c7 0 11 5 10 13H8c0 6 8 7 13 4v4c-9 4-19 1-18-9 1-4 4-6 7-7-2 1-2 3-2 4h8C16 3 6 4 1 11z" fill="#0e78d7"/></svg></button>
      <button class="pin run"><svg width="24" height="24" viewBox="0 0 24 24"><circle cx="12" cy="12" r="11.500" fill="#f7cc3c"/><path d="M12 12L2 6a11.500 11.500 0 0 1 20 0z" fill="#e4493a"/><path d="M12 12l-2 11.500A11.500 11.500 0 0 1 2 6z" fill="#35a257"/><circle cx="12" cy="12" r="5.500" fill="#fff"/><circle cx="12" cy="12" r="4.500" fill="#3f83f0"/></svg></button>
      <button class="pin run current"><svg width="24" height="24" viewBox="0 0 24 24"><path d="M0 0h24v24H0z" fill="#f7e9e6"/><use href="#acadA" x="3" y="1" width="18" height="22"/></svg></button>
      <button class="pin run"><svg width="26" height="24" viewBox="0 0 26 24"><path d="M12 2h13v20H12z" fill="#fff" stroke="#2a579a"/><path d="M14 6h9M14 10h9M14 14h9M14 18h9" stroke="#2a579a" stroke-width="2"/><path d="M0 3l15-3v24L0 21z" fill="#2a579a"/><path d="M3 8l2 8 2.500-7L10 16l2-8" fill="none" stroke="#fff" stroke-width="2"/></svg></button>
      <button class="pin run"><svg width="24" height="24" viewBox="0 0 24 24"><rect width="24" height="24" rx="2" fill="#4a9a0b"/><path d="M19 5H9Q6 5 6 8v8q0 3 3 3h10" fill="none" stroke="#fff" stroke-width="4"/></svg></button>
      <button class="pin run"><svg width="24" height="24" viewBox="0 0 24 24"><rect width="24" height="24" rx="2" fill="#f8654c"/><path d="M19 5H9Q6 5 6 8v8q0 3 3 3h10" fill="none" stroke="#fff" stroke-width="4"/></svg></button>
      <div class="tray">
        <svg viewBox="0 0 24 24" class="t people"><circle cx="16" cy="5" r="4"/><circle cx="8" cy="11" r="3.500"/><path d="M2 24c0-12 12-12 12 0M12 14c5-6 10-3 11 3"/></svg>
        <svg viewBox="0 0 24 24" class="t"><path d="M4 16l8-9 8 9"/></svg>
        <svg viewBox="0 0 24 24"><path d="M3 1h8v9H3zM13 1h8v9h-8zM3 12h8v6l-8 6zM13 12h8v12l-8-6z" fill="#fff"/></svg>
        <svg viewBox="0 0 24 24"><ellipse cx="11" cy="12" rx="7" ry="11" fill="#111" stroke="#333"/><ellipse cx="11" cy="17" rx="5" ry="6" fill="#f4f4f4"/><path d="M3 11c4 3 12 3 16 0v5c-5 2-11 2-16 0z" fill="#d8302a"/><path d="M4 23q3-3 6 0z" fill="#f6b23c"/><path d="M7 7h8l-4 3z" fill="#f6b23c"/><circle cx="17" cy="17" r="6" fill="#f79a4b"/><path d="M14 15h6M14 19h6" stroke="#fff" stroke-width="1.500"/></svg>
        <svg viewBox="0 0 24 24" class="t"><path d="M9 7h13v11H6v-3M22 10h2v5h-2"/><path d="M9 9h11v7H9z" fill="#fff"/><path d="M1 6v4q3 4 6 0V6zM3 3v3M5 3v3M4 12v6h3"/></svg>
        <svg viewBox="0 0 24 24" class="t"><path d="M1 9h4l6-6v18l-6-6H1zM14 8q3 4 0 8M17 6q4 6 0 12M20 3q6 9 0 18"/></svg>
        <svg viewBox="0 0 24 24" class="t"><path d="M4 22C2 12 10 4 21 5M9 22C8 15 13 9 21 10M14 22c0-5 3-8 7-8"/><circle cx="20" cy="21" r="1.500" fill="#fff"/></svg>
        <span>英</span>
        <svg class="sg" viewBox="0 0 24 24"><use href="#sogou"/></svg>
        <time>0:09</time>
        <svg class="note" viewBox="0 0 24 24"><path d="M0 0h24v19h-8l-4 5-4-5H0z" fill="#fff"/><path d="M5 5h14M5 9h14M5 13h9" stroke="#222" stroke-width="1.500"/></svg>
      </div>
    </footer>
  </div>
</body>
</html>
```

FILE: styles.css
```css
* {
  box-sizing: border-box;
}

html, body {
  margin: 0;
  height: 100%;
}

body {
  font-family: "Open Sans", "Noto Sans CJK SC", sans-serif;
  font-size: 18px;
  line-height: 24px;
  color: #f0f0f0;
  background: #383838;
  overflow: hidden;
}

button, input, select {
  margin: 0;
  padding: 0;
  border: 0;
  background: none;
  color: inherit;
  font: inherit;
}

button {
  display: flex;
  align-items: center;
  justify-content: center;
  white-space: nowrap;
}

svg {
  display: block;
  flex: none;
}

.defs {
  position: absolute;
}

.app {
  position: relative;
  display: flex;
  flex-direction: column;
  height: 100vh;
}

.caret {
  flex: none;
  width: 0;
  height: 0;
  border: 4px solid transparent;
  border-top: 5px solid #fff;
  border-bottom: 0;
}

.caret.lg {
  border-width: 7px 6px 0;
}

.caret.dark {
  border-width: 7px 6px 0;
  border-top-color: #333;
}

.caret.faint {
  border-top-color: #bbb;
}

.caret.gray {
  border-top-color: #555;
}

.w {
  fill: none;
  stroke: #dedede;
}

.b {
  fill: none;
  stroke: #6fb7f7;
}

.bf {
  fill: #6fb7f7;
}

.l {
  fill: none;
  stroke: #e4e4e4;
}

/* title bar */
.app-button {
  position: absolute;
  left: 0;
  top: 0;
  z-index: 2;
  width: 60px;
  height: 58px;
  padding: 0 0 16px 2px;
  border: solid #111;
  border-width: 0 2px 2px 0;
  background: linear-gradient(#aaa, #8e8e8e 50%, #5f5f5f);
}

.app-button .caret {
  margin: 10px 0 0 4px;
}

.titlebar {
  display: flex;
  height: 34px;
  background: #fff;
}

.quick {
  display: flex;
  align-items: center;
  width: 381px;
  padding-left: 66px;
  background: linear-gradient(#8a8a8a, #a2a2a2 50%, #7e7e7e);
  border-bottom: 2px solid #505050;
}

.quick button {
  width: 36px;
}

.quick .slim {
  width: 19px;
}

.title {
  flex: 1;
  margin: 0;
  text-align: right;
  color: #111;
  font-size: 19px;
  font-weight: 400;
  line-height: 32px;
}

.notice {
  width: 624px;
  height: 32px;
  background: #757575;
  border-right: 2px solid #333;
}

.notice span {
  display: block;
  width: fit-content;
  background: #494949;
  color: #e4e4e4;
  font-size: 28px;
  font-weight: 700;
  line-height: 32px;
  white-space: nowrap;
}

.account {
  display: flex;
  align-items: center;
  width: 355px;
  padding-left: 2px;
  background: linear-gradient(#8a8a8a, #a2a2a2 50%, #7e7e7e);
  border: solid #505050;
  border-width: 0 1px 2px 0;
}

.account .icon {
  width: 36px;
}

.login {
  gap: 6px;
  padding-left: 4px;
}

.account .push {
  margin: 0 12px 0 auto;
}

.account .more {
  width: 42px;
  height: 22px;
  margin-left: 12px;
  border-left: 1px solid #a6a6a6;
}

.window-buttons {
  display: flex;
  width: 267px;
  padding-left: 54px;
}

.window-buttons button {
  width: 71px;
}

.wb {
  fill: none;
  stroke: #888;
}

/* menus */
.menubar {
  display: flex;
  align-items: center;
  gap: 32px;
  height: 32px;
  padding: 0 64px 0 75px;
  background: linear-gradient(#8f8f8f, #6a6a6a 70%, #505050);
  border-bottom: 2px solid #2e2e2e;
}

.addons {
  display: flex;
  gap: 22px;
}

.min-doc {
  width: 15px;
  height: 3px;
  margin-left: auto;
  margin-right: -12px;
  background: #222;
}

.netdisk {
  position: absolute;
  right: 0;
  top: 29px;
  z-index: 2;
  display: flex;
  align-items: center;
  width: 50px;
  height: 56px;
  padding-left: 10px;
  border-radius: 12px 0 0 12px;
  background: linear-gradient(60deg, #48a8fd, #3385ff);
}

.ribbon-tabs {
  display: flex;
  align-items: flex-end;
  height: 31px;
  padding: 0 0 1px 6px;
  background: #545454;
  border-bottom: 2px solid #2e2e2e;
  color: #d8d8d8;
}

.ribbon-tabs button {
  height: 25px;
  padding: 0 15px;
}

.ribbon-tabs .active {
  padding: 0 13px;
  margin-right: 1px;
  border: 1px solid #333;
  border-bottom: 0;
  background: linear-gradient(#6c6c6c, #5c5c5c);
  color: #fff;
}

.ribbon-tabs .pill {
  gap: 7px;
  margin-left: 16px;
}

/* ribbon */
.ribbon {
  display: flex;
  height: 148px;
  background: #3c3c3c;
  border-bottom: 3px solid #8c8c8c;
}

.panel {
  display: flex;
  flex-direction: column;
  background: #5c5c5c;
  border-right: 2px solid #3a3a3a;
  border-bottom: 2px solid #3a3a3a;
}

.tools {
  display: flex;
  flex: 1;
  padding: 4px 0 0 4px;
}

.panel footer {
  position: relative;
  display: flex;
  align-items: center;
  justify-content: center;
  gap: 10px;
  height: 27px;
  margin: 0 1px 0 3px;
  padding-top: 3px;
  background: #4c4c4c;
}

.launch {
  position: absolute;
  right: 4px;
}

.big {
  flex: none;
  flex-direction: column;
  justify-content: flex-start;
  width: 60px;
}

.big svg {
  width: 60px;
  height: 60px;
}

.big .caret {
  margin-top: 2px;
}

.small {
  display: grid;
  grid-auto-rows: 36px;
  align-items: center;
}

.small svg {
  width: 26px;
  height: 26px;
}

.small .caret {
  justify-self: center;
}

.small .on {
  width: 36px;
  height: 33px;
  border: 1px solid #2c3f66;
  background: linear-gradient(#5a7cb4, #7499d2);
}

.cols-2 {
  grid-template-columns: 34px 18px;
}

.cols-5 {
  grid-template-columns: 43px 43px 43px 10px 60px;
}

.cols-layer {
  grid-template-columns: repeat(5, 36px);
}

.draw { width: 318px; }
.draw .cols-2 { padding-left: 10px; }
.modify { width: 200px; }
.modify .tools { padding-left: 1px; }
.annotate { width: 191px; }
.annotate .tools { padding-left: 7px; }
.annotate .big + .big { margin-left: 4px; }
.layers { width: 377px; }
.layers .tools { padding-left: 1px; }
.block { width: 120px; }
.block .tools { padding-left: 2px; }
.props { width: 301px; }
.props .tools { padding-left: 2px; }
.group { width: 102px; }
.group .tools { padding-left: 2px; }
.utils { width: 114px; }
.utils .tools { padding-left: 8px; }
.utils .small { padding-left: 10px; }
.view { width: 92px; }
.view .tools { padding-left: 16px; }

.panel.view footer {
  padding-right: 16px;
}

.clip {
  width: 92px;
  margin-top: 2px;
  border: solid #333;
  border-width: 0 3px 2px 2px;
  background: linear-gradient(#6c6c6c, #545454);
}

.clip .tools {
  justify-content: center;
  padding: 0;
}

.panel.clip footer {
  background: none;
}

.combo {
  position: relative;
  display: flex;
  align-items: center;
  height: 33px;
  padding-left: 8px;
  border: 2px solid #383838;
  background: linear-gradient(#707070, #555);
}

.combo::after {
  content: "";
  position: absolute;
  right: 2px;
  border: 6px solid transparent;
  border-top: 6px solid #fff;
  border-bottom: 0;
}

.combo select {
  flex: 1;
  appearance: none;
  outline: 0;
}

.swatch {
  width: 24px;
  height: 24px;
  background: #fff;
  border: 2px solid #ddd;
}

.swatch.black {
  width: 22px;
  height: 22px;
  border-color: #111;
}

.layer-box .combo {
  width: 312px;
  gap: 7px;
  padding-left: 7px;
  margin-top: 3px;
}

.layer-box .small {
  margin-top: 1px;
}

.prop-icons {
  display: flex;
  flex-direction: column;
  gap: 12px;
  width: 29px;
  padding: 6px 0 0 3px;
}

.prop-combos {
  display: flex;
  flex-direction: column;
  gap: 2px;
  width: 207px;
  padding-top: 2px;
}

.prop-combos .combo {
  padding-left: 4px;
}

.prop-combos .swatch {
  margin: 0 16px 0 14px;
}

.rule {
  width: 96px;
  height: 2px;
  margin-right: 4px;
  background: #fff;
}

/* document tabs */
.doc-tabs {
  display: flex;
  align-items: flex-end;
  height: 43px;
  padding: 0 0 0 22px;
  border-bottom: 6px solid #585858;
  background: #383838;
}

.doc-tab {
  justify-content: space-between;
  width: 203px;
  height: 33px;
  padding: 0 30px 0 25px;
  background: linear-gradient(#828282, #5c5c5c);
  clip-path: polygon(0 100%, 4% 85%, 7% 15%, 10% 0, 90% 0, 93% 15%, 97% 85%, 100% 100%);
}

.add-tab {
  width: 32px;
  height: 22px;
  margin-bottom: 4px;
  border-radius: 6px 18px 6px 18px;
  background: #555;
}

/* drawing area */
.canvas {
  position: relative;
  flex: 1;
  min-height: 0;
  overflow: hidden;
  background: #212732;
}

.drawing {
  position: absolute;
  inset: 0;
}

.line {
  fill: none;
  stroke: #eceef2;
  stroke-width: 1.3;
}

.dim {
  fill: #fff;
  font-family: "Liberation Sans", sans-serif;
  font-size: 15px;
}

.tiny {
  font-size: 9px;
}

.stamp {
  fill: #33363f;
  font-family: "Noto Sans CJK SC", sans-serif;
  font-size: 45px;
  text-anchor: middle;
}

.view-label {
  position: absolute;
  left: 2px;
  top: 5px;
  color: #050505;
}

.viewcube {
  position: absolute;
  right: 36px;
  top: 21px;
  display: grid;
  place-items: center;
  width: 112px;
  height: 112px;
  border: 12px solid #3f4652;
  border-radius: 50%;
  color: #b0b5bf;
}

.viewcube button {
  width: 48px;
  height: 48px;
  border: 5px solid #b5b8bd;
  background: #a0a4ac;
  color: #333843;
  font-size: 27px;
}

.viewcube span {
  position: absolute;
}

.n { top: -20px; }
.s { bottom: -22px; }
.w1 { left: -18px; }
.e { right: -18px; }

.wcs {
  position: absolute;
  right: 57px;
  top: 158px;
  gap: 9px;
  width: 70px;
  height: 26px;
  border: 2px solid #7c808b;
  border-radius: 5px;
  background: #8f939e;
  color: #3a404c;
  font-family: "Liberation Sans", sans-serif;
  font-size: 16px;
}

.wcs i {
  border: 6px solid transparent;
  border-top-color: #a9adb8;
  border-bottom: 0;
}

.navbar {
  position: absolute;
  right: 17px;
  top: 218px;
  width: 46px;
  height: 311px;
  padding: 4px;
  border-radius: 3px;
  background: #595f68;
}

.edge {
  position: absolute;
  right: 0;
  top: 0;
  bottom: 0;
  width: 14px;
  border-right: 3px solid #3c403e;
  background: linear-gradient(to right, transparent 9px, #5cc8f0 9px), linear-gradient(#b4d0f0, #e6f0fb 90px, #b4ceee 91px);
}

.command {
  position: absolute;
  left: 347px;
  right: 347px;
  bottom: 1px;
  display: flex;
  height: 72px;
  border: 1px solid #7b7e82;
  border-radius: 4px 3px 0 4px;
  overflow: hidden;
}

/* ucs origin box, drawn over the command window */
.origin {
  position: absolute;
  left: 499px;
  bottom: 66px;
  width: 14px;
  height: 14px;
  border: 1px solid #eceef2;
}

.cmd-side {
  display: flex;
  flex-direction: column;
  align-items: center;
  justify-content: space-between;
  width: 33px;
  padding: 7px 0 2px;
  background: linear-gradient(#77797b, #454545);
}

.grip {
  width: 27px;
  border-top: 2px dotted #909294;
}

.cmd-main {
  display: flex;
  flex: 1;
  flex-direction: column;
  color: #0c0c0c;
}

.cmd-main output {
  height: 38px;
  padding: 5px 4px 0;
  border-bottom: 1px solid #5e5f61;
  background: #96989a;
  font-family: "Liberation Mono", "Noto Sans CJK SC", monospace;
  font-size: 19px;
  line-height: 36px;
  white-space: nowrap;
}

.cmd-line {
  display: flex;
  flex: 1;
  align-items: center;
  gap: 6px;
  padding: 0 6px 0 8px;
  background: #bbbdc0;
}

.cmd-line input {
  flex: 1;
  padding-left: 7px;
  font-size: 20px;
  font-style: italic;
  outline: 0;
}

.cmd-line input::placeholder {
  color: #6e7176;
  opacity: 1;
}

.up {
  border: 6px solid transparent;
  border-bottom-color: #111;
  border-top: 0;
}

/* layout tabs */
.layout-row {
  display: flex;
  justify-content: space-between;
  height: 42px;
  border-top: 2px solid #5e5e5e;
  background: #383838;
}

.sheets {
  display: flex;
  height: 26px;
  padding-left: 12px;
  color: #b4b4b4;
}

.sheets button {
  width: 82px;
  background: linear-gradient(#505050, #6a6a6a);
  clip-path: polygon(0 0, 100% 0, 95% 20%, 88% 85%, 84% 100%, 16% 100%, 12% 85%, 5% 20%);
}

.sheets .active {
  width: 76px;
  background: linear-gradient(#5c5c5c, #8a8a8a);
  color: #fff;
  font-weight: 700;
}

.sheets .add {
  width: 34px;
  height: 24px;
  margin-left: 3px;
  border-radius: 18px 6px 18px 6px;
  background: #555;
  clip-path: none;
}

.dimscale {
  width: 468px;
  padding: 5px 9px;
  overflow: hidden;
  border: 2px solid #727272;
  background: #4c4c4c;
  color: #fff;
  white-space: nowrap;
}

/* status bar */
.status {
  display: flex;
  gap: 1px;
  height: 40px;
  padding-left: 18px;
  border-top: 1px solid #555;
  background: #4a4a4a;
}

.grp {
  display: flex;
  align-items: center;
  border: solid #727272;
  border-width: 2px 2px 0;
}

.grp button {
  width: 36px;
  height: 37px;
  color: #fff;
}

.grp svg {
  width: 24px;
  height: 24px;
  overflow: visible;
}

.grp .sep {
  width: 38px;
  border-right: 2px solid #6a6a6a;
}

.grp .dd {
  width: 23px;
}

.grp .dd.sep {
  width: 25px;
}

.grp .wide {
  width: 45px;
}

.grp .caret {
  border-width: 7px 5px 0;
}

.grp .on {
  border: 1px solid #4a4a4a;
  background: #5b8cc6;
}

.grp .on.sep {
  border-right: 2px solid #6a6a6a;
}

.grp.coords button {
  justify-content: flex-end;
  width: 272px;
  padding-right: 8px;
  font-size: 17px;
  font-weight: 600;
}

.grp.model button {
  width: 43px;
  font-weight: 700;
}

.grp .scale {
  gap: 6px;
  width: 106px;
  font-size: 16px;
}

.grp .units {
  justify-content: space-between;
  width: 114px;
  padding: 0 8px 0 10px;
}

.grp.last {
  flex: 1;
  border-right: 0;
}

/* input method bar */
.ime {
  position: absolute;
  right: 0;
  bottom: 73px;
  z-index: 2;
  display: flex;
  align-items: center;
  justify-content: space-between;
  width: 280px;
  height: 37px;
  padding: 0 6px 0 20px;
  background: #fff;
  color: #1a73c8;
  fill: #1a73c8;
}

.ime svg {
  width: 24px;
  height: 24px;
}

.ime b {
  font-size: 22px;
}

.ime .ime-logo {
  position: absolute;
  left: -32px;
  top: -4px;
  width: 44px;
  height: 44px;
}

.ime .person {
  fill: #b9c0d6;
}

/* taskbar */
.taskbar {
  display: flex;
  height: 46px;
  background: #161616;
}

.taskbar button {
  width: 55px;
}

.taskbar .pin {
  width: 57px;
}

.taskbar .run {
  width: 43px;
  margin: 0 7px;
  border-top: 3px solid transparent;
  border-bottom: 3px solid #7ab4ea;
}

.taskbar .current {
  width: 55px;
  margin: 0 1px;
  border-top-color: #444;
  background: #444;
}

.tray {
  display: flex;
  align-items: center;
  gap: 12px;
  margin-left: auto;
  padding-right: 38px;
  color: #fff;
}

.tray svg {
  width: 24px;
  height: 24px;
}

.t {
  fill: none;
  stroke: #fff;
  stroke-width: 1.5;
}

.tray .people {
  margin-right: 8px;
}

.tray .sg {
  margin-left: 10px;
}

.tray time {
  margin: 0 22px 0 20px;
}
```
